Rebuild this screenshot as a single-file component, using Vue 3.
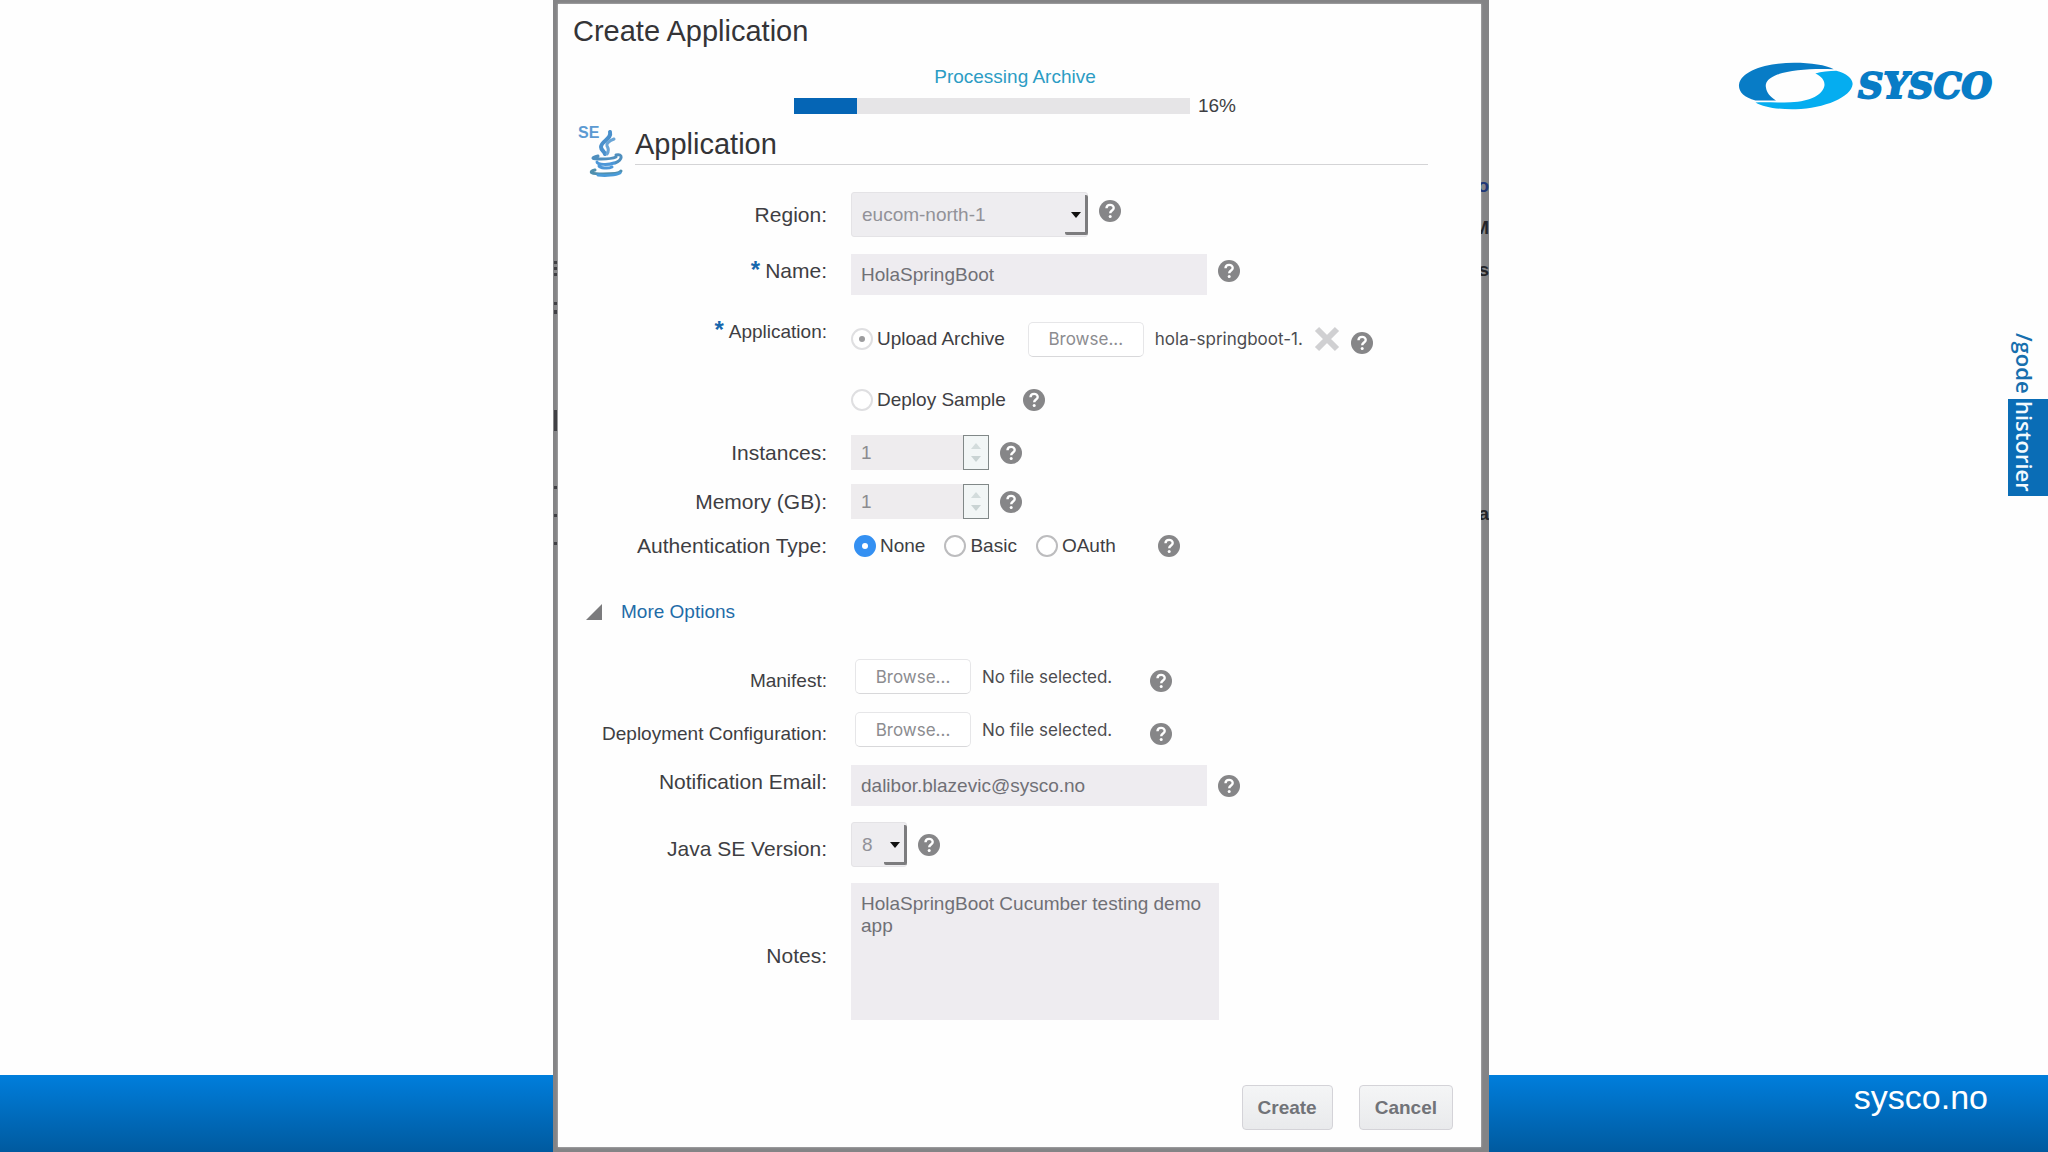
<template>
  <div class="slide">
    <div class="backdrop">
      <div class="edge edge-left" aria-hidden="true">
        <span
          v-for="mark in leftMarks"
          :key="mark.top"
          class="mark"
          :style="{ top: mark.top + 'px', height: mark.height + 'px' }"
        ></span>
      </div>

      <main class="dialog">
        <h1 class="title">Create Application</h1>

        <div class="progress-area">
          <p class="progress-title">Processing Archive</p>
          <div class="progress-line">
            <div class="progress-track" role="progressbar" aria-label="Processing Archive" :aria-valuenow="progress">
              <div class="progress-fill" :style="{ width: progress + '%' }"></div>
            </div>
            <span>{{ progress }}%</span>
          </div>
        </div>

        <header class="section-head">
          <svg class="java-icon" viewBox="0 0 48 54" aria-hidden="true">
            <text x="0" y="14" class="java-se">SE</text>
            <g fill="none" stroke-linecap="round">
              <path d="M32 8c2 7-9 9-9 15 0 3 3 4 4 7" stroke="#4a90cc" stroke-width="4" />
              <path d="M36 15c-5 2-8 4-7 7 1 2 3 4 0 8" stroke="#6aa5d6" stroke-width="3" />
              <path d="M20 32c-8 2-6 3 3 3s13-1 15-2" stroke="#4f8fbe" stroke-width="3" />
              <path d="M38 31c7-2 7 5-1 8" stroke="#4f8fbe" stroke-width="3" />
              <path d="M19 38c0 3 12 3 17 1M21 42c1 2 9 3 13 1" stroke="#4c97d8" stroke-width="3" />
              <path d="M17 46c-7 2-4 4 8 4 10 0 17-1 18-3" stroke="#4f8fae" stroke-width="3" />
              <path d="M20 51c8 1 18 0 22-2" stroke="#4a9bd8" stroke-width="3" />
            </g>
          </svg>
          <h2>Application</h2>
        </header>

        <form @submit.prevent>
          <div class="row row-region">
            <label class="label" for="region">Region:</label>
            <div class="control">
              <div class="select-box select-wide">
                <select id="region" v-model="region" disabled>
                  <option>eucom-north-1</option>
                </select>
                <span class="caret"></span>
              </div>
              <HelpIcon class="raised" />
            </div>
          </div>

          <div class="row row-name">
            <label class="label raised" for="name"><span class="required">*</span>Name:</label>
            <div class="control">
              <input id="name" v-model="name" class="text-input" type="text" disabled>
              <HelpIcon class="raised" />
            </div>
          </div>

          <div class="row row-upload">
            <span class="label label-small"><span class="required">*</span>Application:</span>
            <div class="control">
              <label class="radio">
                <input v-model="source" type="radio" name="source" value="archive" disabled>Upload Archive
              </label>
              <div class="file">
                <button type="button" class="browse" disabled>Browse...</button>
                <span>hola-springboot-1.</span>
              </div>
              <button type="button" class="remove" aria-label="Remove file">
                <svg viewBox="0 0 26 26"><path d="M3 3l20 20M23 3L3 23" stroke="#d0d0d2" stroke-width="6" /></svg>
              </button>
              <HelpIcon class="lowered" />
            </div>
          </div>

          <div class="row row-sample">
            <span></span>
            <div class="control control-loose">
              <label class="radio">
                <input v-model="source" type="radio" name="source" value="sample" disabled>Deploy Sample
              </label>
              <HelpIcon />
            </div>
          </div>

          <div v-for="field in numberFields" :key="field.id" class="row row-number">
            <label class="label" :for="field.id">{{ field.label }}</label>
            <div class="control">
              <div class="number">
                <input :id="field.id" v-model="field.value" type="number" disabled>
                <div class="spin">
                  <button type="button" aria-label="Increase" disabled>
                    <svg viewBox="0 0 10 6"><path d="M0 6L5 0l5 6z" fill="#d3dcdc" /></svg>
                  </button>
                  <button type="button" aria-label="Decrease" disabled>
                    <svg viewBox="0 0 10 6"><path d="M0 0l5 6 5-6z" fill="#c9d3d3" /></svg>
                  </button>
                </div>
              </div>
              <HelpIcon />
            </div>
          </div>

          <div class="row row-auth">
            <span class="label">Authentication Type:</span>
            <div class="control">
              <div class="radio-group">
                <label v-for="type in authTypes" :key="type" class="radio active">
                  <input v-model="auth" type="radio" name="auth" :value="type">{{ type }}
                </label>
              </div>
              <HelpIcon />
            </div>
          </div>

          <button type="button" class="more">
            <svg viewBox="0 0 16 16"><path d="M16 0v16H0z" fill="#7b7b7d" /></svg>
            More Options
          </button>

          <div v-for="item in files" :key="item" class="row row-file">
            <span class="label label-small lowered">{{ item }}</span>
            <div class="control control-file">
              <div class="file">
                <button type="button" class="browse" disabled>Browse...</button>
                <span>No file selected.</span>
              </div>
              <HelpIcon class="lowered" />
            </div>
          </div>

          <div class="row row-email">
            <label class="label raised" for="email">Notification Email:</label>
            <div class="control">
              <input id="email" v-model="email" class="text-input" type="text" disabled>
              <HelpIcon />
            </div>
          </div>

          <div class="row row-java">
            <label class="label lowered" for="java">Java SE Version:</label>
            <div class="control">
              <div class="select-box select-small">
                <select id="java" v-model="javaVersion" disabled>
                  <option>8</option>
                </select>
                <span class="caret"></span>
              </div>
              <HelpIcon />
            </div>
          </div>

          <div class="row row-notes">
            <label class="label lowered" for="notes">Notes:</label>
            <div class="control">
              <textarea id="notes" v-model="notes" disabled></textarea>
            </div>
          </div>

          <div class="actions">
            <button type="submit" class="btn">Create</button>
            <button type="button" class="btn">Cancel</button>
          </div>
        </form>
      </main>

      <div class="edge edge-right" aria-hidden="true">
        <span
          v-for="letter in rightLetters"
          :key="letter.text"
          class="letter"
          :class="{ link: letter.link }"
          :style="{ top: letter.top + 'px' }"
        >{{ letter.text }}</span>
      </div>
    </div>

    <aside class="brand">
      <div class="logo">
        <svg viewBox="113 92 345 148" aria-hidden="true">
          <path
            d="M165 209C130 200 114 182 116 162 122 120 200 97 280 97c50 0 95 7 118 19-58-3-128 1-168 16-25 10-37 23-34 38 2 16 12 28 30 39z"
            fill="#087cc6"
          />
          <path
            d="M165 215c25 15 70 21 120 20 85-3 165-35 169-75 0-15-19-32-49-39-20 1-45 3-62 8 19 9 29 21 27 36-4 25-40 47-100 49-35 2-70 0-105 1z"
            fill="#05adf0"
          />
        </svg>
        <span>SYSCO</span>
      </div>
      <div class="tag">
        <span class="tag-first">/gode</span>
        <span class="tag-second">historier</span>
      </div>
    </aside>

    <footer class="footer">
      <a href="#">sysco.no</a>
    </footer>
  </div>
</template>

<script setup>
import { ref, h } from 'vue'

// round question mark next to every field
const HelpIcon = () =>
  h('svg', { class: 'help', viewBox: '0 0 22 22', width: 22, height: 22, role: 'img', 'aria-label': 'Help' }, [
    h('circle', { cx: 11, cy: 11, r: 11, fill: '#868688' }),
    h('path', {
      d: 'M7.5 8.3c0-4.6 7.2-4.4 7.2-.4 0 2.6-3.5 2.6-3.5 5.4',
      fill: 'none',
      stroke: '#fff',
      'stroke-width': 2.4
    }),
    h('circle', { cx: 11.2, cy: 16.6, r: 1.5, fill: '#fff' })
  ])

const progress = ref(16)
const region = ref('eucom-north-1')
const name = ref('HolaSpringBoot')
const source = ref('archive')
const auth = ref('None')
const email = ref('dalibor.blazevic@sysco.no')
const javaVersion = ref('8')
const notes = ref('HolaSpringBoot Cucumber testing demo app')

const numberFields = ref([
  { id: 'instances', label: 'Instances:', value: 1 },
  { id: 'memory', label: 'Memory (GB):', value: 1 }
])
const authTypes = ['None', 'Basic', 'OAuth']
const files = ['Manifest:', 'Deployment Configuration:']

// pieces of the page behind the dialog
const leftMarks = [
  { top: 261, height: 3 },
  { top: 267, height: 3 },
  { top: 273, height: 3 },
  { top: 302, height: 3 },
  { top: 310, height: 4 },
  { top: 410, height: 21 },
  { top: 486, height: 3 },
  { top: 514, height: 3 },
  { top: 542, height: 3 }
]
const rightLetters = [
  { text: 'o', top: 175, link: true },
  { text: 'M', top: 217 },
  { text: 's', top: 259 },
  { text: 'a', top: 503 }
]
</script>

<style>
body {
  margin: 0;
}
</style>

<style scoped>
.slide {
  display: grid;
  grid-template-columns: minmax(0, 553fr) minmax(0, 936fr) minmax(0, 559fr);
  grid-template-rows: 1fr 77px;
  min-height: 100vh;
  background: #fefefe;
  color: #3e3e43;
  font-family: "Liberation Sans", Arial, sans-serif;
  font-size: 19px;
  line-height: 22px;
}

.backdrop {
  grid-column: 2;
  grid-row: 1 / 3;
  z-index: 1;
  display: grid;
  grid-template-columns: 5px minmax(0, 1fr) 8px;
  padding: 4px 0 5px;
  background: #848486;
}

.edge {
  position: relative;
  overflow: hidden;
}

.mark {
  position: absolute;
  left: 1px;
  width: 3px;
  margin-top: -4px;
  background: #404044;
}

.letter {
  position: absolute;
  right: 0;
  margin-top: -4px;
  color: #242428;
  font-weight: bold;
}

.letter.link {
  color: #203878;
}

.dialog {
  padding: 10px 0 14px;
  background: #fefefe;
  box-shadow: 0 0 2px #c8c8c8;
}

.title,
.section-head h2 {
  margin: 0;
  color: #343437;
  font-size: 29px;
  font-weight: normal;
}

.title {
  padding-left: 15px;
  line-height: 34px;
}

.progress-area {
  display: flex;
  flex-direction: column;
  align-items: center;
  gap: 7px;
  padding: 18px 24px 0 15px;
}

.progress-title {
  margin: 0;
  color: #2b9cc4;
}

.progress-line {
  display: flex;
  align-items: center;
  gap: 8px;
}

.progress-track {
  width: 396px;
  height: 16px;
  background: #e6e5e7;
}

.progress-fill {
  height: 100%;
  background: #0565b5;
}

.section-head {
  display: flex;
  align-items: flex-start;
  gap: 9px;
  margin: 7px 53px 14px 20px;
}

.java-icon {
  width: 48px;
  height: 54px;
}

.java-se {
  fill: #5c9ad2;
  font-size: 16px;
  font-weight: bold;
}

.section-head h2 {
  flex: 1;
  border-bottom: 1px solid #d4d4d6;
  line-height: 40px;
}

.row {
  display: grid;
  grid-template-columns: 269px minmax(0, 1fr);
  align-items: center;
  column-gap: 24px;
}

.label {
  font-size: 21px;
  text-align: right;
}

.label-small {
  font-size: 19px;
}

.raised {
  padding-bottom: 8px;
}

.lowered {
  padding-top: 8px;
}

.required {
  margin-right: 5px;
  color: #1767ad;
  font-size: 24px;
  font-weight: bold;
  line-height: 1px;
}

.control {
  display: flex;
  align-items: center;
  gap: 11px;
}

.control-loose {
  gap: 17px;
}

.control-file {
  gap: 38px;
  padding-left: 4px;
}

.help {
  flex: none;
}

.row-region,
.row-java {
  min-height: 45px;
}

.row-name {
  margin-top: 17px;
}

.row-upload {
  margin-top: 26px;
}

.row-upload .label {
  padding-bottom: 14px;
}

.row-sample {
  min-height: 32px;
  margin-top: 27px;
}

.row-number {
  margin-top: 14px;
}

.row-sample + .row-number {
  margin-top: 19px;
}

.row-auth {
  min-height: 32px;
  margin-top: 11px;
}

.row-auth .control {
  gap: 42px;
}

.row-file {
  margin-top: 18px;
}

.more + .row-file {
  margin-top: 31px;
}

.row-email {
  margin-top: 18px;
}

.row-java,
.row-notes {
  margin-top: 16px;
}

input,
select,
textarea,
button {
  box-sizing: border-box;
  margin: 0;
  font: inherit;
  opacity: 1;
}

.text-input,
textarea {
  padding: 0 10px;
  border: 0;
  background: #eeecf0;
  color: #707076;
}

.text-input {
  width: 356px;
  height: 41px;
}

textarea {
  display: block;
  width: 368px;
  height: 137px;
  padding: 10px;
  resize: none;
}

.select-box {
  position: relative;
  height: 45px;
}

.select-wide {
  width: 237px;
}

.select-small {
  width: 56px;
}

.select-box select {
  width: 100%;
  height: 100%;
  padding: 0 10px;
  appearance: none;
  border: 1px solid #e4e3e6;
  border-radius: 3px;
  background: #eeedf0;
  color: #929298;
}

.caret {
  position: absolute;
  right: 0;
  bottom: 2px;
  box-sizing: border-box;
  width: 23px;
  height: 40px;
  border-right: 3px solid #7c7c7e;
  border-bottom: 3px solid #7c7c7e;
  border-radius: 2px;
  pointer-events: none;
}

.caret::after {
  position: absolute;
  top: 17px;
  right: 4px;
  border: 5px solid transparent;
  border-top: 6px solid #111;
  border-bottom: 0;
  content: "";
}

.radio {
  display: flex;
  align-items: center;
  gap: 4px;
}

.radio input {
  display: grid;
  place-items: center;
  width: 22px;
  height: 22px;
  appearance: none;
  border: 2px solid #dfdfe1;
  border-radius: 50%;
  background: #fff;
}

.radio input:checked::after {
  width: 6px;
  height: 6px;
  border-radius: 50%;
  background: #9c9c9e;
  content: "";
}

.radio.active input {
  border-color: #bcbcbe;
}

.radio.active input:checked {
  border-color: #3490f2;
  background: #3490f2;
}

.radio.active input:checked::after {
  background: #fff;
}

.radio-group {
  display: flex;
  gap: 19px;
  padding-left: 3px;
}

.file {
  display: flex;
  align-items: center;
  gap: 11px;
  color: #4c4c50;
  font-family: Inter, sans-serif;
  font-size: 17px;
}

.row-upload .file {
  margin-left: 12px;
}

.browse {
  width: 116px;
  height: 35px;
  padding: 0;
  border: 1px solid #e6e6e8;
  border-bottom-color: #d8d8da;
  border-radius: 5px;
  background: #fff;
  color: #8c8c90;
}

.remove {
  width: 26px;
  height: 26px;
  padding: 0;
  border: 0;
  background: none;
}

.remove svg {
  display: block;
}

.number {
  display: flex;
  height: 35px;
}

.number input {
  width: 112px;
  padding: 0 10px;
  appearance: textfield;
  border: 0;
  background: #eeecee;
  color: #8c8c90;
}

.number input::-webkit-inner-spin-button {
  appearance: none;
}

.spin {
  box-sizing: border-box;
  display: flex;
  flex-direction: column;
  justify-content: space-evenly;
  width: 26px;
  border: 1px solid #818888;
  background: #f2f6f6;
}

.spin button {
  display: flex;
  justify-content: center;
  padding: 0;
  border: 0;
  background: none;
}

.spin svg {
  width: 10px;
  height: 6px;
}

.more {
  display: flex;
  align-items: center;
  gap: 19px;
  height: 32px;
  margin: 34px 0 0 28px;
  padding: 0;
  border: 0;
  background: none;
  color: #1f6ca8;
}

.more svg {
  width: 16px;
  height: 16px;
}

.actions {
  display: flex;
  justify-content: flex-end;
  gap: 26px;
  margin: 65px 28px 0 0;
}

.btn {
  height: 45px;
  padding: 0 15px;
  border: 1px solid #d4d3d8;
  border-radius: 4px;
  background: linear-gradient(#f4f5f6, #e9eaec);
  color: #717378;
  font-weight: bold;
}

.brand {
  display: flex;
  flex-direction: column;
  grid-column: 3;
  grid-row: 1;
  align-items: flex-end;
  gap: 222px;
  padding-top: 61px;
}

.logo {
  display: flex;
  align-items: center;
  gap: 4px;
  margin-right: 56px;
  color: #087cc6;
  font-family: "DejaVu Serif", serif;
  font-size: 35px;
  font-style: italic;
  font-weight: bold;
  line-height: 50px;
  -webkit-text-stroke: 2px #087cc6;
}

.logo svg {
  width: 116px;
  height: 50px;
}

.tag {
  display: flex;
  width: 40px;
  color: #176fae;
  font-family: "Open Sans", sans-serif;
  font-size: 22px;
  font-weight: 600;
  line-height: 30px;
  writing-mode: vertical-rl;
  flex-direction: row;
}

.tag span {
  box-sizing: border-box;
  width: 40px;
  padding-right: 8px;
}

.tag-first {
  padding-bottom: 5px;
}

.tag-second {
  padding-top: 2px;
  padding-bottom: 5px;
  background: #0a6db6;
  color: #f2fafe;
}

.footer {
  grid-column: 1 / 4;
  grid-row: 2;
  padding: 2px 60px 0 0;
  background: linear-gradient(#007edc, #005a9f);
  text-align: right;
}

.footer a {
  color: #fff;
  font-size: 34px;
  line-height: 40px;
  text-decoration: none;
}
</style>
